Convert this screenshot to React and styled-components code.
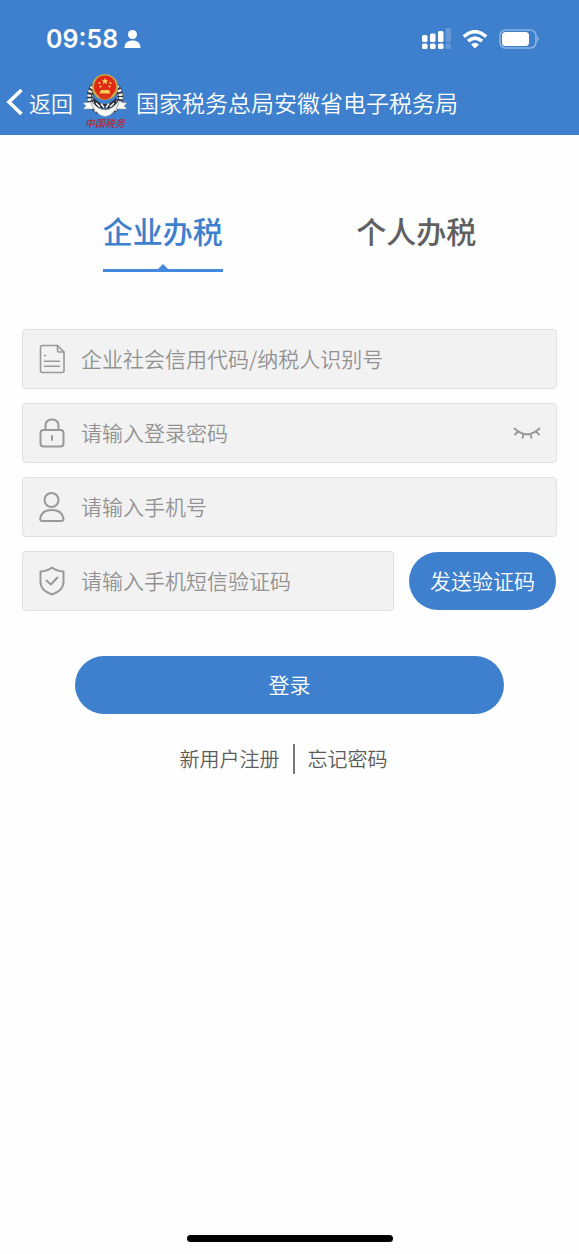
import React, { useState } from "react";
import styled, { createGlobalStyle } from "styled-components";

const BLUE = "#3e80cd";
const GREY = "#999999";

const GlobalStyle = createGlobalStyle`
  * { box-sizing: border-box; }
  body { margin: 0; background: #fefefe; }
  body, button, input {
    font-family: "Noto Sans CJK SC", "Liberation Sans", sans-serif;
  }
`;

const Page = styled.div`
  min-height: 100vh;
  display: flex;
  flex-direction: column;
`;

const Header = styled.header`
  background: ${BLUE};
  color: #fff;
`;

const StatusBar = styled.div`
  height: 70px;
  padding: 8px 39px 0 46px;
  display: flex;
  align-items: center;
  justify-content: space-between;
`;

const StatusGroup = styled.div`
  display: flex;
  align-items: center;
  gap: ${(p) => p.$gap}px;
`;

const Time = styled.span`
  font: 600 25px/32px Inter, sans-serif;
`;

const NavBar = styled.div`
  height: 65px;
  padding: 0 6px 1px;
  display: flex;
  align-items: center;
`;

const BackButton = styled.button`
  display: flex;
  align-items: center;
  gap: 6px;
  padding: 0;
  border: 0;
  background: none;
  color: inherit;
  font-size: 22px;
  line-height: 32px;
  font-weight: 350;
`;

const Emblem = styled.svg`
  flex: none;
  margin: 0 8px 0 9px;
`;

const Title = styled.h1`
  margin: 0;
  font-size: 23px;
  line-height: 32px;
  font-weight: 350;
  white-space: nowrap;
`;

const Tabs = styled.div`
  display: grid;
  grid-template-columns: 1fr 1fr;
  justify-items: center;
  padding: 70px 36px 0;
`;

const Tab = styled.button`
  position: relative;
  padding: 0 0 14px;
  border: 0;
  border-bottom: 3px solid ${(p) => (p.$active ? "#4288dc" : "transparent")};
  background: none;
  color: ${(p) => (p.$active ? BLUE : "#606060")};
  font-size: 30px;
  line-height: 50px;
  font-weight: 500;

  &::after {
    content: "";
    position: absolute;
    left: 50%;
    bottom: 0;
    margin-left: -5px;
    border: 5px solid transparent;
    border-top: 0;
    border-bottom-color: ${(p) => (p.$active ? "#4288dc" : "transparent")};
  }
`;

const Form = styled.form`
  display: flex;
  flex-direction: column;
  gap: 14px;
  padding: 57px 22px 0;
`;

const Field = styled.label`
  flex: 1;
  min-width: 0;
  height: 60px;
  padding: 0 15px;
  display: flex;
  align-items: center;
  gap: 15px;
  border: 1px solid #e0e0e0;
  border-radius: 4px;
  background: #f2f2f2;
  flex-basis: ${(p) => (p.$inline ? "0" : "auto")};

  > svg { flex: none; }
`;

const Input = styled.input`
  flex: 1;
  min-width: 0;
  width: 100%;
  padding: 0 0 2px;
  border: 0;
  outline: 0;
  background: none;
  color: #333;
  font-size: 21px;
  line-height: 32px;
  font-weight: 350;

  &::placeholder { color: #929292; opacity: 1; }
`;

const EyeButton = styled.button`
  display: flex;
  padding: 0;
  border: 0;
  background: none;
`;

const CodeRow = styled.div`
  display: flex;
  align-items: center;
  gap: 15px;
  padding-right: 1px;
`;

const PillButton = styled.button`
  height: 58px;
  padding: 0 21px 2px;
  border: 0;
  border-radius: 29px;
  background: ${BLUE};
  color: #fff;
  font-size: 21px;
  line-height: 32px;
  font-weight: 350;
`;

const SubmitButton = styled(PillButton)`
  margin: 31px 53px 0;
`;

const Links = styled.nav`
  display: flex;
  justify-content: center;
  margin-top: 30px;
  padding-right: 12px;
`;

const TextLink = styled.a`
  padding: 0 13px;
  color: #5c5c5c;
  font-size: 20px;
  line-height: 30px;
  font-weight: 350;
  text-decoration: none;

  & + & { border-left: 2px solid #777; }
`;

const HomeIndicator = styled.div`
  width: 206px;
  height: 7px;
  margin: auto auto 12px;
  border-radius: 4px;
  background: #000;
`;

const Line = ({ width = 28, height = 30, children, weight = 2 }) => (
  <svg width={width} height={height} viewBox={`0 0 ${width} ${height}`} fill="none"
    stroke={GREY} strokeWidth={weight} strokeLinecap="round" strokeLinejoin="round" aria-hidden="true">
    {children}
  </svg>
);

const DocumentIcon = () => (
  <Line weight={1.6}>
    <path d="M19.5 1.5H4.500Q2.500 1.5 2.500 3.500V26.500Q2.500 28.500 4.500 28.500H24Q26 28.500 26 26.500V8Z" />
    <path d="M19.500 1.500V6.500Q19.500 8 21 8H26M6.500 11.500H7.500M6.500 17.200H21.500M6.500 22.200H21.500" />
  </Line>
);

const LockIcon = () => (
  <Line>
    <rect x="2.500" y="12" width="23" height="16.500" rx="3" />
    <path d="M7.500 12V8Q7.500 1.500 14 1.500T20.500 8V12M14 18V22" />
  </Line>
);

const PersonIcon = () => (
  <Line>
    <circle cx="13.500" cy="8" r="7" />
    <path d="M4.500 29Q2 29 2.200 26.500C3 20.500 7.500 18 13.800 18S24.500 20.500 25.500 26.500Q25.500 29 23 29Z" />
  </Line>
);

const ShieldIcon = () => (
  <Line>
    <path d="M14 1.500Q18.500 5 25.500 5.500V16Q25.500 24.500 14 28.500Q2.500 24.500 2.500 16V5.500Q9.500 5 14 1.500Z" />
    <path d="M8.500 14.500L12.800 18.500L19.500 11.500" />
  </Line>
);

const ClosedEyeIcon = () => (
  <Line height={14} weight={1.8}>
    <path d="M1.500 2.500Q14 14 26.500 2.500M5 5.500L2 8.500M10.500 8L9.500 12M17.500 8L18.500 12M23 5.500L26 8.500" />
  </Line>
);

const UserGlyph = () => (
  <svg width="17" height="18" viewBox="0 0 17 18" fill="#fff" aria-hidden="true">
    <circle cx="8.500" cy="4.500" r="4.500" />
    <path d="M0.500 18C0.500 12.500 4 10.500 8.500 10.500S16.500 12.500 16.500 18Z" />
  </svg>
);

const SignalIcon = () => (
  <svg width="30" height="22" viewBox="0 0 30 22" fill="#fff" aria-hidden="true">
    <rect x="1" y="7" width="5.500" height="7" rx="1.500" />
    <rect x="9" y="5.500" width="5.500" height="8.500" rx="1.500" />
    <rect x="17" y="3" width="5.500" height="11" rx="1.500" />
    <rect x="1" y="15.500" width="5.500" height="5.500" rx="1.500" />
    <rect x="9" y="15.500" width="5.500" height="5.500" rx="1.500" />
    <rect x="17" y="15.500" width="5.500" height="5.500" rx="1.500" />
    <g opacity="0.200">
      <rect x="24.500" y="0" width="5.500" height="14" rx="1.500" />
      <rect x="24.500" y="15.500" width="5.500" height="5.500" rx="1.500" />
    </g>
  </svg>
);

const WifiIcon = () => (
  <svg width="26" height="19" viewBox="0 0 26 19" fill="none" stroke="#fff" strokeWidth="3.600" aria-hidden="true">
    <path d="M1.800 6.700Q13 -3.300 24.200 6.700" />
    <path d="M6 11.200Q13 5 20 11.200" />
    <path d="M13 18.500L9 14.600Q13 11 17 14.600Z" fill="#fff" stroke="none" />
  </svg>
);

const BatteryIcon = () => (
  <svg width="41" height="20" viewBox="0 0 41 20" aria-hidden="true">
    <rect x="1" y="1" width="36" height="18" rx="5.500" fill="none" stroke="#fff" strokeOpacity="0.400" strokeWidth="1.600" />
    <rect x="3" y="3" width="27" height="14" rx="3.500" fill="#fff" />
    <path d="M38.500 7Q41 10 38.500 13Z" fill="#fff" opacity="0.500" />
  </svg>
);

const TaxEmblem = () => (
  <Emblem width="46" height="60" viewBox="0 0 46 60" role="img" aria-label="中国税务">
    <circle cx="23" cy="25" r="15" fill="none" stroke="#2b3140" strokeWidth="6.500" />
    <circle cx="23" cy="25" r="15" fill="none" stroke="#f4f4ee" strokeWidth="5.500" strokeDasharray="2.200 1.727" />
    <circle cx="23" cy="25" r="13.500" fill="none" stroke="#2b3140" strokeWidth="1" />
    <path d="M12 26Q23 38 34 26V36H12Z" fill="#2b3140" />
    <path d="M14 31L18 35M19 31.500L22 35.500M27 31.500L24 35.500M32 31L28 35" stroke="#f4f4ee" strokeWidth="1.600" />
    <circle cx="23" cy="15" r="13" fill="#c9a64a" />
    <circle cx="23" cy="14.500" r="11" fill="#e02a16" />
    <path d="M16 23H30L28 26Q23 29 18 26Z" fill="#d8381c" />
    <path d="M19 18H27L28.500 21.500H17.500Z" fill="#f3cf55" />
    <path d="M23 6L24 8.300H26.300L24.500 9.800L25.200 12L23 10.700L20.800 12L21.500 9.800L19.700 8.300H22Z" fill="#f8d95b" />
    <g fill="#f8d95b">
      <circle cx="17.500" cy="11" r="1" /><circle cx="28.500" cy="11" r="1" />
      <circle cx="18.500" cy="14.500" r="1" /><circle cx="27.500" cy="14.500" r="1" />
    </g>
    <path d="M1 31L10 30Q23 46 36 30L45 31L42 34L45 37L34 37Q23 52 12 37L1 37L4 34Z" fill="#fbfbf8" stroke="#8b94a5" strokeWidth="0.500" />
    <path d="M9 31L12 37M37 31L34 37" stroke="#7d8797" strokeWidth="0.800" />
    <text x="23" y="55" textAnchor="middle" fill="#b22a3a" fontSize="10" fontWeight="500" fontStyle="italic" fontFamily="Noto Sans CJK SC, sans-serif">中国税务</text>
  </Emblem>
);

export default function App() {
  const [tab, setTab] = useState("企业办税");
  return (
    <>
      <GlobalStyle />
      <Page>
        <Header>
          <StatusBar>
            <StatusGroup $gap={6}><Time>09:58</Time><UserGlyph /></StatusGroup>
            <StatusGroup $gap={11}><SignalIcon /><WifiIcon /><BatteryIcon /></StatusGroup>
          </StatusBar>
          <NavBar>
            <BackButton type="button">
              <svg width="17" height="28" viewBox="0 0 17 28" fill="none" stroke="#fff" strokeWidth="3.600" aria-hidden="true">
                <path d="M15.500 2L3 14L15.500 26" />
              </svg>
              返回
            </BackButton>
            <TaxEmblem />
            <Title>国家税务总局安徽省电子税务局</Title>
          </NavBar>
        </Header>

        <Tabs role="tablist">
          {["企业办税", "个人办税"].map((name) => (
            <Tab key={name} type="button" role="tab" aria-selected={tab === name}
              $active={tab === name} onClick={() => setTab(name)}>{name}</Tab>
          ))}
        </Tabs>

        <Form onSubmit={(e) => e.preventDefault()}>
          <Field>
            <DocumentIcon />
            <Input type="text" aria-label="企业社会信用代码/纳税人识别号" placeholder="企业社会信用代码/纳税人识别号" />
          </Field>
          <Field>
            <LockIcon />
            <Input type="password" aria-label="登录密码" placeholder="请输入登录密码" />
            <EyeButton type="button" aria-label="显示密码"><ClosedEyeIcon /></EyeButton>
          </Field>
          <Field>
            <PersonIcon />
            <Input type="tel" aria-label="手机号" placeholder="请输入手机号" />
          </Field>
          <CodeRow>
            <Field $inline>
              <ShieldIcon />
              <Input type="text" aria-label="短信验证码" placeholder="请输入手机短信验证码" />
            </Field>
            <PillButton type="button">发送验证码</PillButton>
          </CodeRow>
          <SubmitButton type="submit">登录</SubmitButton>
        </Form>

        <Links>
          <TextLink href="#register">新用户注册</TextLink>
          <TextLink href="#forgot">忘记密码</TextLink>
        </Links>
        <HomeIndicator />
      </Page>
    </>
  );
}
